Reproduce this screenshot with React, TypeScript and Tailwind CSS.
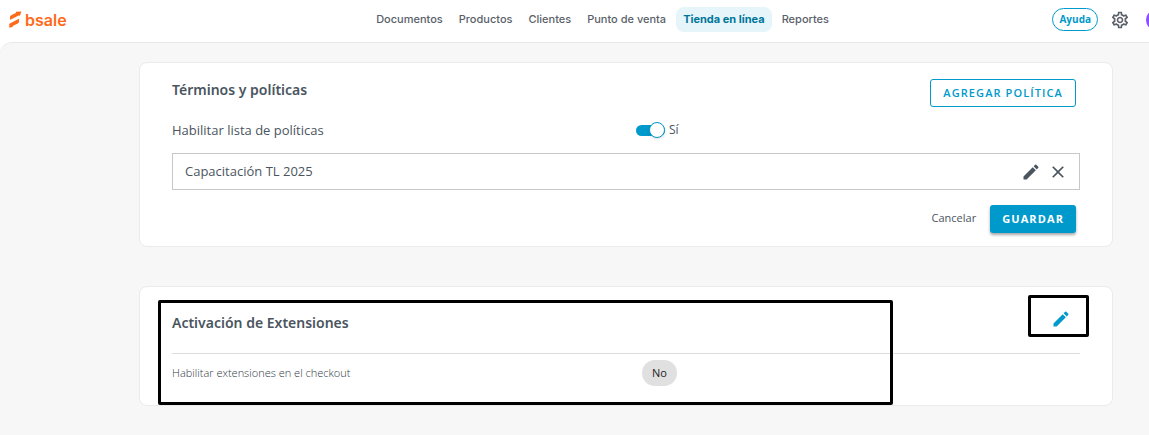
import { useState, type ReactNode } from 'react';
import { MdClose, MdEdit, MdOutlineSettings } from 'react-icons/md';

const menu = ['Documentos', 'Productos', 'Clientes', 'Punto de venta', 'Tienda en línea', 'Reportes'];
const activeItem = 'Tienda en línea';

const policies = ['Capacitación TL 2025'];

function Logo() {
  return (
    <a href="#" aria-label="bsale" className="flex items-center gap-[3px] text-[#ff6a1a]">
      <svg width="13" height="17" viewBox="0 0 13 17" fill="currentColor" aria-hidden="true">
        <path d="M1 8.8V5.4L2.2 4.2 7.2 1.8 6.8.8 12.4.6 10.9 5 10.1 4.2 4.4 7.2Z" />
        <path d="M10 7.8V11.2L8.8 12.4 3.6 15 4 15.8.3 16.8V12.8L1.4 12.2 6.6 9.4Z" />
      </svg>
      <span className="font-['Inter',sans-serif] text-base leading-5 font-semibold">bsale</span>
    </a>
  );
}

function Header() {
  return (
    <header className="flex h-[42px] items-start overflow-hidden bg-white pt-[7px] pl-[9px]">
      <div className="flex h-[25px] flex-1 items-center">
        <Logo />
      </div>
      <nav className="flex shrink-0 gap-1 font-['Inter',sans-serif] text-[11px]">
        {menu.map((item) => (
          <a
            key={item}
            href="#"
            className={
              item === activeItem
                ? 'rounded-lg bg-[#e5f5fa] px-[7px] leading-[25px] font-bold text-[#00759a]'
                : 'px-1.5 leading-[25px] font-medium text-[#5a5f6b]'
            }
          >
            {item}
          </a>
        ))}
      </nav>
      <div className="flex h-[25px] w-[314px] shrink-0 items-center justify-end gap-3">
        <button className="h-[23px] rounded-full border border-[#0099cc] px-1.5 text-[10px] font-bold text-[#0099cc]">
          Ayuda
        </button>
        <button aria-label="Configuración" className="text-[#5b606b]">
          <MdOutlineSettings className="h-5 w-5" />
        </button>
        <button aria-label="Cuenta" className="-mr-[19px] ml-1 h-[22px] w-[22px] shrink-0 rounded-full bg-[#8b4dff]" />
      </div>
    </header>
  );
}

function Card({ children, className }: { children: ReactNode; className: string }) {
  return (
    <section className={`relative rounded-lg border border-[#ebebeb] bg-white px-8 pt-4 ${className}`}>
      {children}
    </section>
  );
}

export default function App() {
  const [enabled, setEnabled] = useState(true);

  return (
    <div className="min-h-screen bg-white font-['Open_Sans',sans-serif] text-[#4a5560]">
      <Header />
      <main className="min-h-[393px] rounded-tl-xl border-t border-[#e8e8e8] bg-[#f7f7f7] pt-[19px] pr-9 pb-7 pl-[139px]">
        <Card className="pb-[13px]">
          <div className="flex h-7 items-center justify-between">
            <h2 className="pb-1.5 font-['Noto_Sans',sans-serif] text-sm font-semibold">Términos y políticas</h2>
            <button className="mr-1 h-7 rounded-[3px] border border-[#0099cc] px-3 text-[11px] font-semibold tracking-widest text-[#0099cc] uppercase">
              Agregar política
            </button>
          </div>

          <div className="mt-3 grid h-[22px] grid-cols-2 items-center">
            <label htmlFor="policies" className="pt-0.5 text-[13px]">
              Habilitar lista de políticas
            </label>
            <label className="flex items-center gap-1 pl-2.5 text-xs">
              <input
                id="policies"
                type="checkbox"
                className="peer sr-only"
                checked={enabled}
                onChange={(e) => setEnabled(e.target.checked)}
              />
              <span className="flex h-[11px] w-[29px] items-center rounded-full bg-[#bdbdbd] peer-checked:justify-end peer-checked:bg-[#0099cc]">
                <span className="h-4 w-4 rounded-full border border-[#0099cc] bg-white shadow-sm" />
              </span>
              {enabled ? 'Sí' : 'No'}
            </label>
          </div>

          <ul className="mt-3">
            {policies.map((name) => (
              <li key={name} className="flex h-[37px] items-center border border-[#c8c8c8] pr-[11px] pl-3 text-[13px]">
                <span className="flex-1">{name}</span>
                <button aria-label="Editar" className="mr-[7px]">
                  <MdEdit className="h-5 w-5" />
                </button>
                <button aria-label="Eliminar">
                  <MdClose className="h-5 w-5" />
                </button>
              </li>
            ))}
          </ul>

          <div className="mt-[15px] mr-1 flex h-7 items-center justify-end gap-[14px]">
            <button className="pb-0.5 text-[11px]">Cancelar</button>
            <button className="h-7 rounded-[3px] bg-[#0099cc] px-3 text-[11px] font-bold tracking-widest text-white uppercase shadow-[0_2px_3px_rgba(0,0,0,0.35)]">
              Guardar
            </button>
          </div>
        </Card>

        <Card className="mt-[39px] pb-[19px]">
          <div className="flex h-[51px] items-start justify-between border-b border-[#dcdcdc]">
            <h2 className="font-['Noto_Sans',sans-serif] text-sm leading-10 font-semibold">Activación de Extensiones</h2>
            <button aria-label="Editar extensiones" className="mt-1.5 mr-[9px] text-[#0099cc]">
              <MdEdit className="h-5 w-5" />
            </button>
          </div>
          <div className="mt-1.5 grid grid-cols-2 items-center">
            <span className="text-[11px] font-light text-[#2f3a45]">Habilitar extensiones en el checkout</span>
            <span className="ml-4 h-[26px] w-[35px] rounded-full bg-[#e0e0e0] text-center text-[11px] leading-[26px] text-[#222]">
              No
            </span>
          </div>

          {/* highlight frames */}
          <div className="pointer-events-none absolute top-[13px] right-[219px] bottom-0 left-[18px] rounded-xs border-3 border-black" />
          <div className="pointer-events-none absolute top-2 right-[23px] h-[42px] w-[61px] rounded-xs border-3 border-black" />
        </Card>
      </main>
    </div>
  );
}
